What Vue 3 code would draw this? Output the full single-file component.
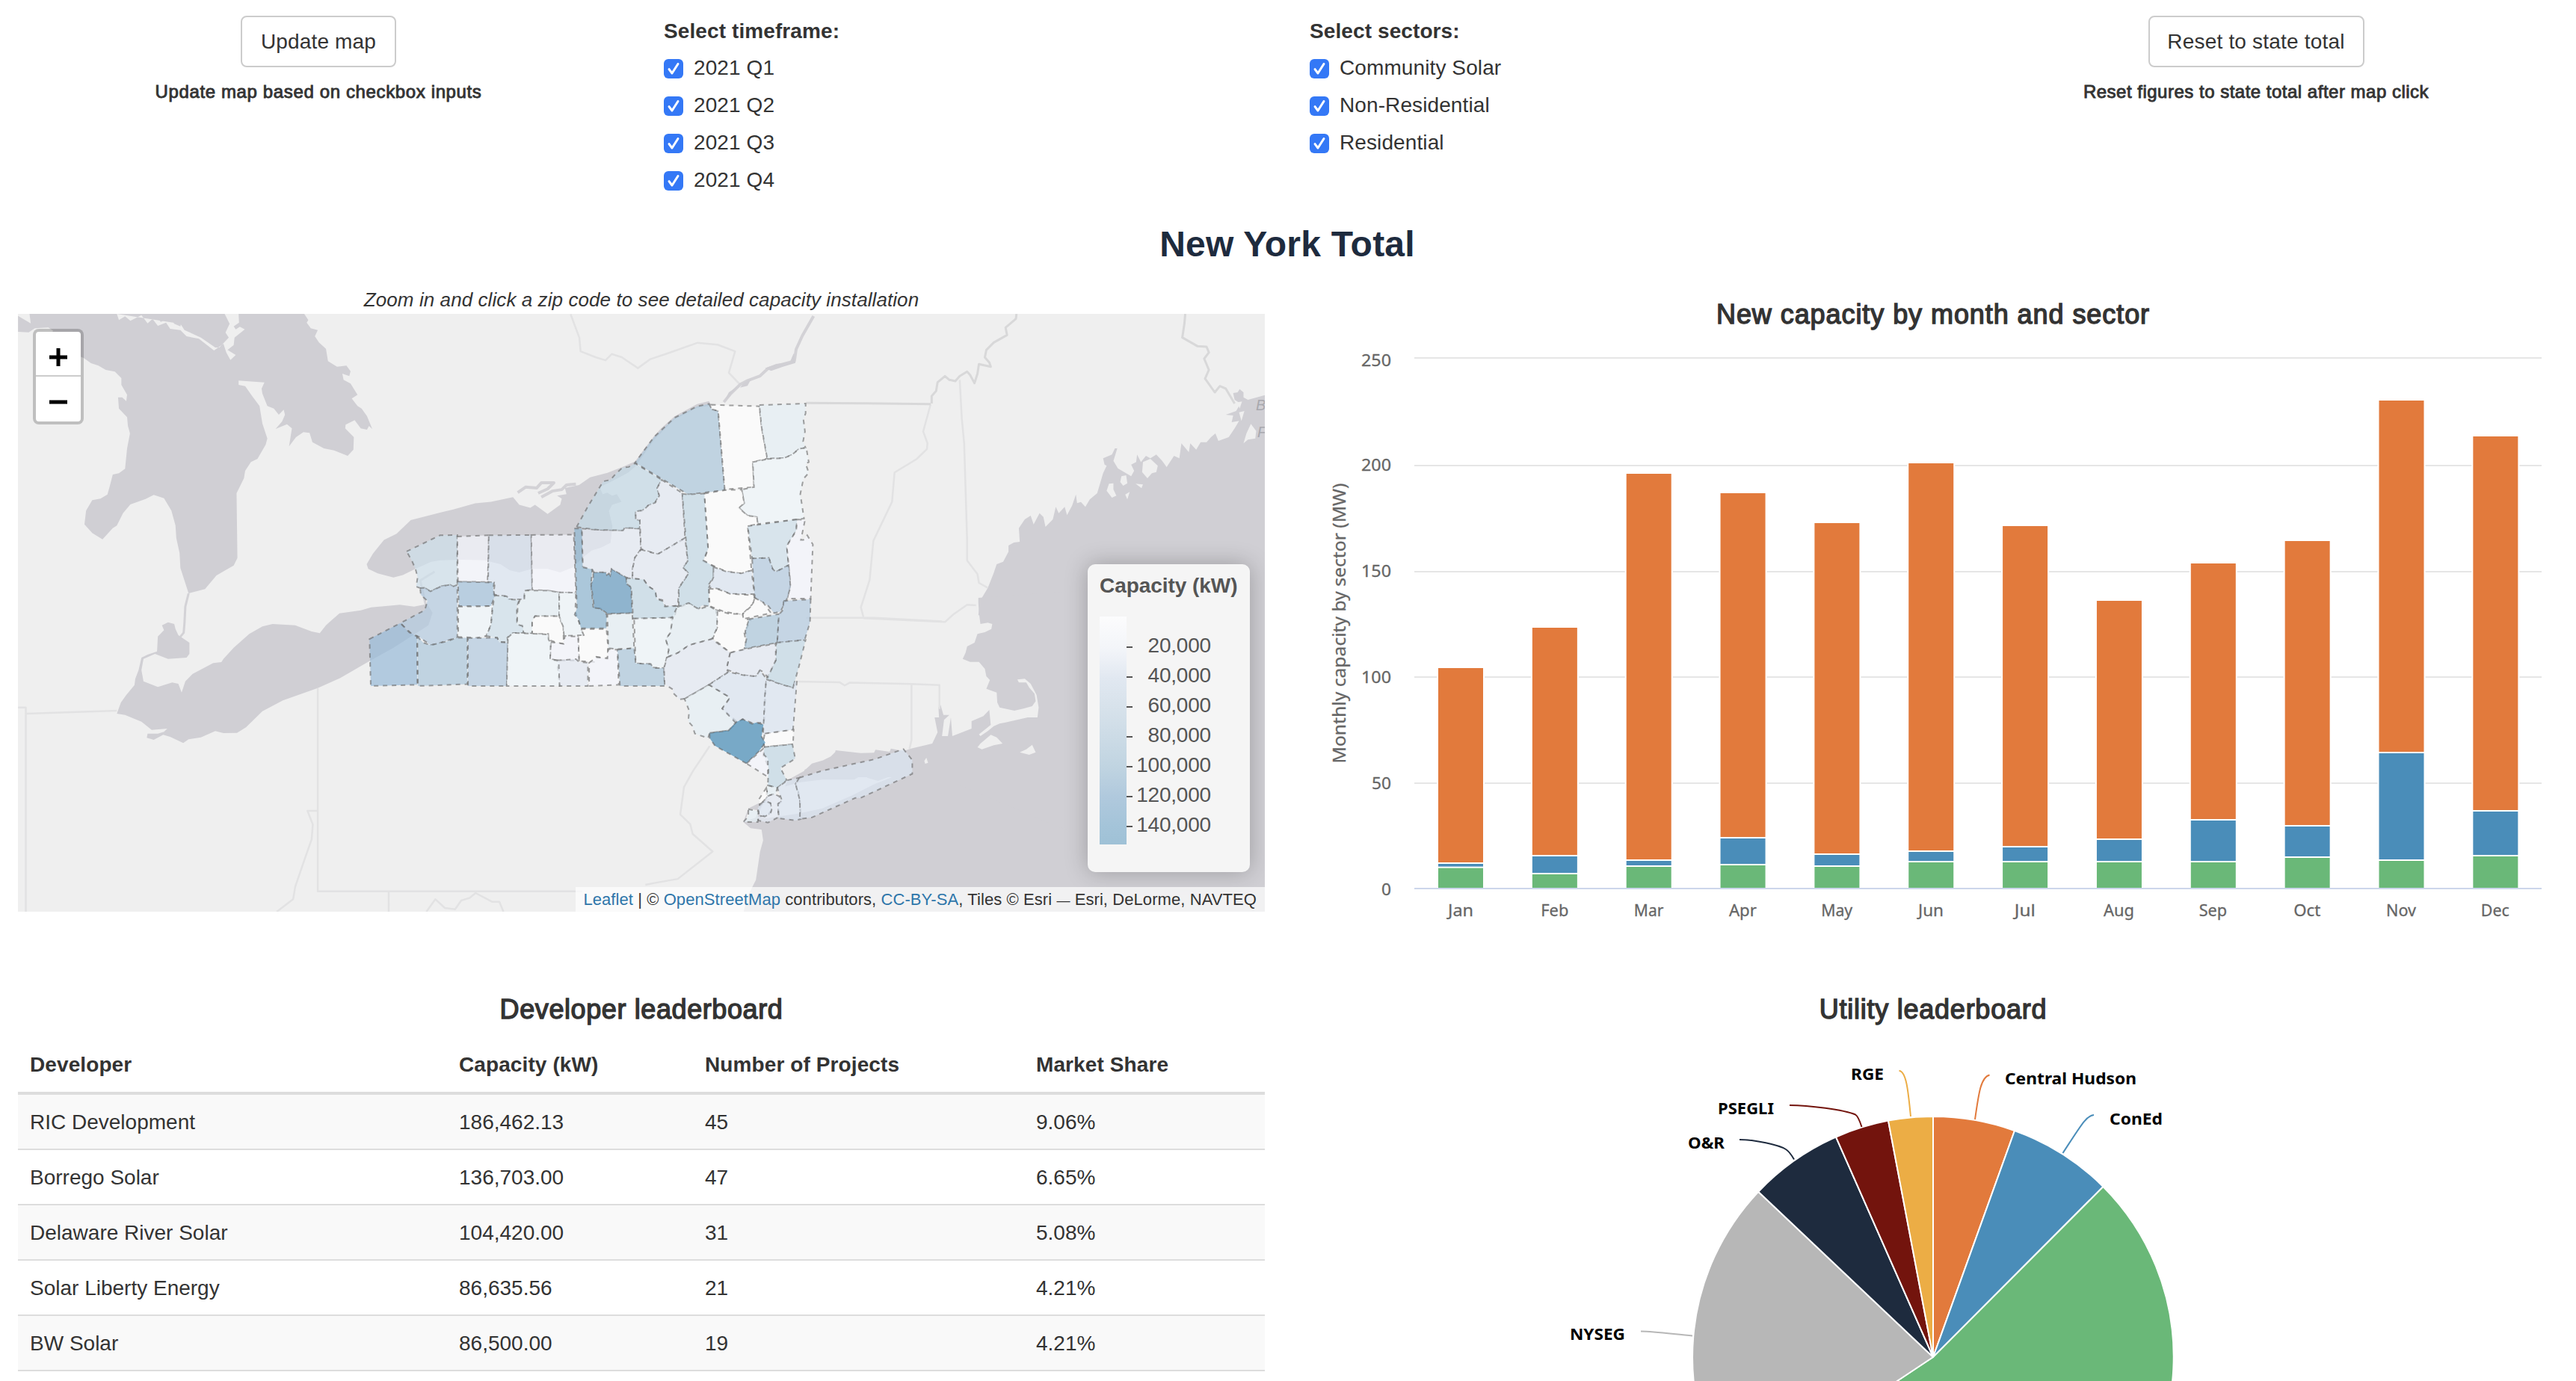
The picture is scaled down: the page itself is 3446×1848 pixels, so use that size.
<script setup>
import { reactive } from 'vue'

const timeframes = reactive([
  { label: '2021 Q1', checked: true },
  { label: '2021 Q2', checked: true },
  { label: '2021 Q3', checked: true },
  { label: '2021 Q4', checked: true },
])
const sectors = reactive([
  { label: 'Community Solar', checked: true },
  { label: 'Non-Residential', checked: true },
  { label: 'Residential', checked: true },
])

const developers = [
  ['RIC Development', '186,462.13', '45', '9.06%'],
  ['Borrego Solar', '136,703.00', '47', '6.65%'],
  ['Delaware River Solar', '104,420.00', '31', '5.08%'],
  ['Solar Liberty Energy', '86,635.56', '21', '4.21%'],
  ['BW Solar', '86,500.00', '19', '4.21%'],
]

// top = top of the stack, mid = top of the blue part, low = top of the green part
const months = [
  { name: 'Jan', w: 34, top: 894, mid: 1155, low: 1160.6 },
  { name: 'Feb', w: 37, top: 840, mid: 1145, low: 1169 },
  { name: 'Mar', w: 39.5, top: 634, mid: 1151, low: 1159 },
  { name: 'Apr', w: 37, top: 660, mid: 1121, low: 1157 },
  { name: 'May', w: 42, top: 700, mid: 1143, low: 1159 },
  { name: 'Jun', w: 34, top: 620, mid: 1139, low: 1153 },
  { name: 'Jul', w: 28, top: 704, mid: 1133, low: 1153 },
  { name: 'Aug', w: 41, top: 804, mid: 1123, low: 1153 },
  { name: 'Sep', w: 37.5, top: 754, mid: 1097, low: 1153 },
  { name: 'Oct', w: 36, top: 724, mid: 1105, low: 1147 },
  { name: 'Nov', w: 40, top: 536, mid: 1007, low: 1151 },
  { name: 'Dec', w: 38, top: 584, mid: 1085, low: 1145 },
].map((m, i) => ({ ...m, x: 1924 + i * 125.85, cx: 1954 + i * 125.8 }))

const gridLines = [478, 622, 764, 905, 1047]
const yLabels = [
  { t: '250', y: 490, w: 40 }, { t: '200', y: 630, w: 40 }, { t: '150', y: 772, w: 40 },
  { t: '100', y: 914, w: 40 }, { t: '50', y: 1056, w: 26 }, { t: '0', y: 1198, w: 13 },
]

const slices = [
  { c: '#e27a3c', d: 'M2586 1816L2586 1494A322 322 0 0 1 2695 1513Z' },
  { c: '#4a8db9', d: 'M2586 1816L2695 1513A322 322 0 0 1 2813.5 1588Z' },
  { c: '#6ab878', d: 'M2586 1816L2813.5 1588A322 322 0 1 1 2318 1994.5Z' },
  { c: '#b7b7b7', d: 'M2586 1816L2318 1994.5A322 322 0 0 1 2352.2 1594.7Z' },
  { c: '#1e2b3e', d: 'M2586 1816L2352.2 1594.7A322 322 0 0 1 2456 1521.5Z' },
  { c: '#73140d', d: 'M2586 1816L2456 1521.5A322 322 0 0 1 2526 1499.6Z' },
  { c: '#ecad45', d: 'M2586 1816L2526 1499.6A322 322 0 0 1 2586 1494Z' },
]
const callouts = [
  { t: 'RGE', x: 2476, y: 1444.7, w: 44, c: '#ecad45', d: 'M2540.5 1432.8C2550 1434 2552.5 1458 2556 1494' },
  { t: 'Central Hudson', x: 2682, y: 1450.6, w: 176, c: '#e27a3c', d: 'M2661.5 1438.4C2650 1441 2647 1462 2642 1498' },
  { t: 'ConEd', x: 2822, y: 1504.8, w: 71, c: '#4a8db9', d: 'M2801 1492C2791 1493 2785 1504 2759.5 1543' },
  { t: 'PSEGLI', x: 2298, y: 1490.8, w: 75, c: '#73140d', d: 'M2394 1479C2420 1479 2466 1485 2482 1491.5Q2486 1494 2490.5 1508' },
  { t: 'O&R', x: 2258, y: 1536.6, w: 49, c: '#1e2b3e', d: 'M2327 1525C2347 1525 2380 1532 2389 1538Q2394 1541 2400 1551.5' },
  { t: 'NYSEG', x: 2100, y: 1792.8, w: 74, c: '#b7b7b7', d: 'M2195 1781.6C2215 1782 2244 1786 2264 1787.5' },
]

const legendTicks = ['20,000', '40,000', '60,000', '80,000', '100,000', '120,000', '140,000']

const shades = {
  w: '#ffffff', a: '#f5f6fd', b: '#eff7fb', c: '#e6eff5', n: '#e4e9f3', d: '#dbe6f2', e: '#cedfeb',
  f: '#c3d8e6', g: '#b3cbdf', h: '#acc8dc', i: '#a3c1da', j: '#99bad8', k: '#8eb6d2', l: '#669bc1', m: '#468bb7',
}
const counties = [
  ['e', '152,583 258,530 313,529 313,690 300,698 290,692 262,697 228,714 208,702 195,703 182,698 187,668 180,640 168,612'],
  ['a', '313,534 413,530 412,600 409,683 315,682'],
  ['d', '413,530 548,529 551,709 527,711 526,740 473,740 470,730 428,724 432,690 430,685 411,683'],
  ['a', '548,529 683,528 690,720 635,717 600,711 551,709'],
  ['g', '195,703 208,702 228,714 262,697 290,692 300,698 313,692 313,865 280,875 250,886 228,890 190,862 170,855 132,818 210,775 218,745 197,725'],
  ['i', '315,682 430,685 427,705 432,730 420,762 385,763 318,762'],
  ['b', '316,764 425,762 420,825 410,845 405,860 375,866 316,863'],
  ['e', '432,727 470,730 478,740 510,742 502,765 503,822 520,825 525,850 490,850 472,865 474,880 445,880 440,866 405,860 420,825 426,762'],
  ['c', '526,740 527,711 600,711 637,717 637,795 560,795 551,810 551,852 523,850 522,828 503,822 505,760 512,742'],
  ['w', '560,795 640,795 642,812 650,830 651,886 630,882 603,872 602,853 551,853 551,815'],
  ['b', '637,717 690,718 688,780 700,815 715,857 652,860 650,830 642,812 637,795'],
  ['k', '685,508 709,508 712,632 742,642 738,690 745,765 768,770 788,790 787,835 706,835 698,805 686,790 693,770 690,660'],
  ['l', '745,651 785,651 788,660 795,656 799,662 803,640 850,668 852,690 865,700 869,785 790,787 768,770 748,768 745,740 738,690 745,675'],
  ['n', '709,508 760,512 840,514 845,505 893,508 897,575 878,602 870,640 870,672 850,668 803,640 799,662 795,655 788,660 785,651 747,651 742,642 712,635'],
  ['f', '692,503 730,432 777,353 800,348 815,330 838,308 858,306 878,294 963,348 948,375 955,400 940,425 920,432 900,450 880,452 880,478 893,480 893,508 845,505 840,514 760,512'],
  ['n', '963,348 1028,392 1037,540 950,592 897,575 893,480 880,478 880,452 905,447 920,432 942,423 955,400 948,375'],
  ['h', '1113,99 1122,117 1142,122 1163,382 1047,396 963,345 878,292 938,208 1003,145 1075,107'],
  ['w', '1120,102 1273,107 1280,175 1298,278 1252,290 1256,372 1163,380 1142,122 1122,117'],
  ['c', '1273,103 1420,98 1420,130 1413,150 1418,190 1412,222 1420,243 1400,246 1375,267 1350,277 1298,278 1280,175'],
  ['b', '1298,280 1350,277 1375,267 1400,246 1422,243 1430,290 1420,295 1430,325 1413,345 1403,395 1415,475 1268,493 1265,470 1235,465 1208,440 1225,425 1217,380 1256,372 1252,290'],
  ['w', '1098,393 1163,382 1217,380 1225,425 1208,440 1235,465 1265,470 1268,493 1236,500 1248,645 1215,655 1165,648 1095,615 1110,575'],
  ['f', '1028,394 1047,396 1098,393 1110,575 1095,612 1127,632 1127,668 1113,690 1113,762 1090,760 1080,772 1048,752 1017,768 1017,702 1048,655 1030,635 1045,615'],
  ['n', '897,577 950,592 1037,538 1045,615 1030,635 1048,655 1017,702 1014,760 975,765 965,742 945,738 942,712 920,697 905,675 870,672 870,640 878,602'],
  ['f', '850,670 905,675 920,697 942,712 947,740 965,745 972,763 1012,762 1003,800 872,803 866,700 852,690'],
  ['e', '1236,500 1393,478 1390,515 1360,565 1366,628 1325,650 1315,640 1303,604 1250,606'],
  ['a', '1393,478 1418,480 1405,545 1413,545 1425,530 1443,560 1436,738 1362,737 1372,690 1366,628 1360,565 1390,515'],
  ['g', '1250,606 1303,604 1315,640 1325,650 1366,628 1372,700 1360,740 1340,780 1320,785 1300,760 1258,735'],
  ['d', '1127,634 1165,648 1215,655 1248,645 1257,723 1180,722 1145,706 1113,700 1127,668'],
  ['w', '1113,705 1145,708 1180,722 1258,727 1252,755 1218,790 1160,780 1115,762'],
  ['w', '1258,735 1285,750 1310,785 1222,804 1218,790 1252,758'],
  ['w', '1135,775 1180,788 1220,787 1222,803 1245,808 1225,850 1230,875 1228,905 1180,915 1125,868 1140,830'],
  ['h', '1240,805 1335,788 1330,882 1225,902 1232,870 1228,845'],
  ['g', '1350,745 1436,740 1434,815 1417,873 1330,882 1335,790 1348,775'],
  ['f', '1327,882 1420,873 1400,955 1380,1030 1340,1018 1295,1000 1325,940'],
  ['n', '1180,915 1228,903 1325,885 1325,940 1300,995 1285,978 1275,972 1262,993 1220,988 1168,970'],
  ['c', '1012,765 1048,752 1080,772 1113,762 1140,778 1138,835 1122,870 1050,890 1015,915 980,930 985,905 975,870 990,850 995,800'],
  ['b', '875,803 998,800 990,850 975,870 985,905 970,965 930,963 925,952 880,950'],
  ['c', '790,788 869,785 875,900 822,903 793,900'],
  ['w', '706,837 787,837 792,895 790,935 755,928 748,945 700,942 697,862 715,857'],
  ['a', '610,880 651,886 655,860 697,862 700,940 630,940 608,935'],
  ['n', '630,940 690,936 700,945 728,948 728,1024 638,1024'],
  ['a', '732,948 755,930 790,933 793,903 822,905 826,1020 732,1024'],
  ['h', '822,905 875,900 880,950 928,952 935,965 970,966 972,1024 830,1024'],
  ['n', '980,930 1015,915 1050,890 1122,870 1180,915 1168,970 1175,978 1113,1020 1035,1066 1020,1068 1000,1048 998,1035 972,1018 970,965'],
  ['c', '1035,1066 1113,1020 1180,1062 1155,1098 1198,1138 1195,1150 1175,1170 1115,1178 1110,1195 1068,1180 1060,1155 1047,1140 1050,1105'],
  ['d', '1113,1020 1175,978 1220,988 1262,993 1275,972 1295,1000 1288,1145 1250,1145 1220,1133 1198,1145 1155,1098 1180,1062'],
  ['d', '1295,1002 1340,1018 1380,1030 1385,1010 1392,1010 1380,1168 1285,1182 1290,1060'],
  ['w', '1290,1180 1382,1167 1380,1215 1290,1224 1285,1210'],
  ['m', '1115,1178 1175,1170 1200,1142 1220,1133 1250,1148 1262,1144 1286,1150 1280,1190 1292,1210 1270,1240 1232,1278 1132,1220 1115,1195'],
  ['f', '1290,1224 1378,1215 1387,1262 1340,1293 1360,1333 1330,1358 1300,1350 1302,1290 1285,1250'],
  ['a', '1232,1278 1285,1230 1288,1250 1300,1262 1300,1322'],
  ['j', '34,870 132,818 160,848 185,862 186,1020 38,1024'],
  ['h', '186,862 205,882 228,890 280,878 310,866 345,866 345,1018 188,1024'],
  ['g', '347,867 440,866 445,880 474,882 470,1024 347,1024'],
  ['b', '474,865 490,850 602,855 603,872 610,882 608,938 635,940 638,1024 470,1024'],
  ['c', '1300,1350 1330,1358 1325,1378 1295,1385'],
  ['w', '1295,1358 1300,1385 1285,1408 1275,1415 1272,1395'],
  ['n', '1300,1385 1318,1378 1335,1385 1345,1400 1335,1410 1332,1455 1300,1472 1270,1465 1268,1452 1300,1448 1312,1430 1308,1408 1285,1403'],
  ['d', '1275,1412 1290,1400 1308,1408 1312,1430 1308,1443 1290,1452 1272,1445 1268,1425'],
  ['c', '1238,1428 1270,1435 1268,1470 1222,1470 1238,1452'],
  ['d', '1362,1333 1400,1325 1388,1345 1395,1360 1402,1400 1405,1460 1388,1465 1335,1458 1332,1410 1345,1400 1338,1380 1330,1358'],
  ['d', '1400,1325 1473,1302 1640,1264 1731,1231 1759,1267 1759,1312 1595,1391 1578,1391 1440,1455 1402,1460 1402,1400 1388,1345'],
]
</script>

<template>
  <main class="page">
    <section class="controls">
      <div class="control center">
        <button class="btn" type="button">Update map</button>
        <p class="hint">Update map based on checkbox inputs</p>
      </div>
      <div class="control">
        <p class="group-label">Select timeframe:</p>
        <label v-for="t in timeframes" :key="t.label" class="check">
          <input v-model="t.checked" type="checkbox" />
          <svg class="box" viewBox="0 0 26 26"><rect width="26" height="26" rx="6" /><path d="M7 13.6L11 19L19 6.5" /></svg>
          <span>{{ t.label }}</span>
        </label>
      </div>
      <div class="control">
        <p class="group-label">Select sectors:</p>
        <label v-for="s in sectors" :key="s.label" class="check">
          <input v-model="s.checked" type="checkbox" />
          <svg class="box" viewBox="0 0 26 26"><rect width="26" height="26" rx="6" /><path d="M7 13.6L11 19L19 6.5" /></svg>
          <span>{{ s.label }}</span>
        </label>
      </div>
      <div class="control center">
        <button class="btn reset" type="button">Reset to state total</button>
        <p class="hint reset-hint">Reset figures to state total after map click</p>
      </div>
    </section>

    <h2 class="heading">New York Total</h2>

    <section class="row figures">
      <div class="col">
        <p class="map-note">Zoom in and click a zip code to see detailed capacity installation</p>
        <div class="map">
          <svg class="tiles" viewBox="24 420 1668 800">
            <!-- Great Lakes -->
            <g transform="translate(0 400) scale(.54847 .33333)" class="water">
              <path d="M72 60L75 98L58 82L44 68V132L70 134L85 118L118 115L130 128L100 170L204 237L222 258L240 268L258 285L280 292L296 318L296 345L310 385L308 410L298 395L288 395L290 440L310 475L312 510L317 540L310 600L305 682L290 700L275 705L268 750L262 785L245 802L225 808L210 850L206 905L225 940L250 965L275 920L285 910L300 860L318 825L355 803L375 787L400 800L418 850L428 910L430 960L438 1020L440 1080L460 1182L500 1165L528 1110L570 1070L579 1040L577 780L595 720L598 690L612 655L628 642L648 585L652 560L640 500L633 430L615 390L598 350L582 345V328L600 330L645 335L638 360L640 380L652 430L668 440L680 465L692 445L695 465L688 492L672 522L700 503L712 520L705 592L722 555L740 535L755 538L762 575L790 600L815 608L848 630L862 605L863 555L842 520L843 505L865 487L880 520L895 525L900 510L908 522L895 470L882 440L872 430L858 400L872 385L855 340L838 325L835 300L852 310L855 290L845 268L822 272L800 250L795 200L778 175L768 150L775 125L758 118L748 95L752 85L742 60Z" />
              <path class="land" d="M285 60L290 85L305 70L318 88L345 65L360 98L372 80L385 108L405 95L415 120L440 125L455 150L485 160L522 207L545 180L552 215L562 245L575 225L555 205L570 185L572 155L597 122L585 112L575 122L570 110L583 95L582 60H548L560 100L550 135L558 155L535 195L525 195L490 155L450 125L440 100Z" />
              <path d="M378 60L392 92L415 75L425 100L440 110L445 75L420 60ZM495 60L505 100L515 60Z" />
              <path class="river" d="M460 1182L452 1235L450 1300L448 1340L438 1360" />
              <path class="river" d="M1060 1095L1025 1130L1040 1240" />
            </g>
            <g transform="translate(0 800) scale(.54847 .33333)" class="water">
              <path d="M410 98L395 110L400 130L385 155L383 215L360 228L345 240L338 290L330 325L328 350L308 390L295 420L285 465L305 470L345 497L370 530L408 525L400 538L385 545L360 545L358 562L375 570L398 550L415 558L447 583L460 568L490 560L525 535L545 543L578 542L600 520L640 455L690 412L775 362L830 322L900 255L960 200L1045 110L1055 60L1042 25L1010 35L975 28L905 38L880 50L828 62L805 95L795 110L780 142L760 135L720 110L665 105L640 115L608 145L570 200L545 245L540 258L520 262L470 305L452 335L443 380L435 345L420 340L385 358L350 335L345 290L350 245L378 225L410 245L455 240L462 225V180L435 150L428 125L425 105Z" />
            </g>
            <g transform="translate(480 500) scale(.42092 .40816)" class="water">
              <path d="M25 625L45 590L80 545L120 525L165 480L260 455L300 445L370 425L420 420L490 405L510 430L545 440L560 430L600 460L640 430L645 410L630 400L660 395L655 375L700 365L735 340L790 325L840 305L878 288L905 250L938 205L960 180L1003 140L1075 100L1113 90L1120 104L1075 112L1003 150L940 215L878 305L855 325L800 355L765 372L775 395L790 390L805 400L820 395L835 420L805 430L795 450L806 500L800 555L770 570L740 580L715 600L680 635L640 652L600 640L550 640L510 652L480 645L450 625L400 612L330 610L260 612L230 617L180 640L140 660L110 668L60 655L30 640Z" />
              <path class="river wide" d="M505 390L530 372L565 375L580 358L620 358L600 378L570 392M580 405L615 385L645 380L660 365L690 362" />
              <path d="M1362 1333L1415 1303L1440 1278L1475 1268L1500 1255L1515 1240L1525 1250H2879V1764H1223L1235 1715L1262 1660L1275 1568L1285 1530L1280 1495L1245 1490L1222 1470L1238 1425L1268 1410L1300 1395L1345 1380Z" />
              <path class="land" d="M1285 1410L1320 1385L1350 1355L1400 1340L1473 1331L1575 1331L1600 1315L1652 1280L1648 1292L1615 1325L1650 1335L1736 1302L1690 1325L1640 1345L1567 1383L1473 1425L1400 1442L1330 1452L1290 1458L1270 1440Z" />
              <path class="land" d="M1240 1425L1268 1432L1262 1455L1228 1468Z" />
            </g>
            <!-- Atlantic coast -->
            <g transform="translate(1100 400) scale(.39541 .33333)" class="water">
              <path d="M1500 385L1470 395L1440 405L1425 395L1425 375L1412 362L1405 375L1390 378L1395 405L1415 420L1400 450L1365 465L1390 468L1385 495L1410 490L1395 520L1375 555L1340 570L1330 540L1315 555L1300 575L1280 575L1265 605L1245 580L1240 615L1215 580L1208 640L1190 630L1165 675L1150 650L1130 625L1110 640L1095 630L1078 655L1065 625L1062 655L1045 665L1055 690L1045 712L1000 680L985 650L998 600L990 600L980 625L950 640L955 665L962 670L950 700L940 740L930 780L905 805L890 835L875 815L862 820L858 785L845 830L828 868L820 835L800 860L790 835L780 885L755 915L748 875L735 860L715 905L705 870L685 885L665 920L668 975L648 978L630 990L630 1015L612 1055L590 1065L580 1100L560 1160L535 1210L528 1270H1500Z" />
              <path class="land" d="M1085 655L1110 642L1135 670L1130 695L1115 700L1100 720L1082 695ZM970 742L985 740L985 765L995 790L980 798L962 770ZM1012 712L1028 708L1032 740L1018 750L1008 735ZM1060 742L1085 745L1080 760ZM1025 785L1040 775L1032 805ZM1450 502L1468 530L1465 560L1440 565L1425 580L1435 540ZM1405 415L1420 412L1412 440ZM1410 455L1428 450L1418 490Z" />
            </g>
            <g transform="translate(1100 740) scale(.39541 .33333)" class="water">
              <path d="M528 180L528 200L530 240L535 285L560 280L575 285L572 305L550 318L525 325L515 360L490 375L485 400L475 425L500 437L530 437L550 465L555 495L567 510L555 545L590 560L592 600L600 620L650 633L680 625L710 615L722 595L718 565L700 540L690 520L665 520L660 508L685 505L705 525L725 570L732 620L728 660L695 660L620 680L600 685L580 695L560 715L535 735L530 728L570 690L565 630L545 655L505 675L505 705L440 735L435 660L425 735L405 735L412 670L430 650L410 650L400 610L393 620L395 660L380 660L390 720L372 765L300 785L275 795L232 785L228 798L180 790L175 802L130 803L45 792L42 812L10 830L-60 870V900H400L1500 1450V100Z" />
              <path class="land" d="M525 780L535 765L550 750L570 730L590 740L610 765L580 772L540 788ZM668 800L690 788L710 770L722 800L700 810ZM345 835L352 822L358 842L348 846Z" />
            </g>
            <!-- borders and rivers -->
            <g transform="translate(760 410) scale(.33333 .52296)" class="border">
              <path d="M10 20L45 80L50 115L110 130L150 138L175 122L215 130L280 158L330 135L400 120L520 93L600 98L670 115L645 170L690 200" />
              <path class="river wide" d="M985 25L940 75L915 110L908 140L850 150L800 160L770 178L720 190L690 200L650 225L625 245" />
              <path class="watery" d="M905 120L912 145L860 155L815 165L790 158L835 147L890 143ZM735 185L720 203L690 208L705 195ZM680 205L655 225L625 245L645 220Z" />
              <path d="M1455 250L1440 285L1425 320L1442 350L1440 365L1400 390L1310 425L1300 500L1225 600L1210 700L1175 770L1185 795" />
              <path d="M568 1125L500 1190L465 1230L450 1300L490 1325L500 1350L580 1395L440 1465L350 1475L310 1480M955 797L1230 797L1500 806M915 960L1090 962L1110 970L1130 963L1378 966L1490 969V1030M1378 966V1110L1370 1132" />
              <path class="national" d="M955 247L1200 248L1455 250" />
            </g>
            <g transform="translate(1100 400) scale(.39541 .33333)" class="border">
              <path class="national" d="M370 420L370 390L385 370L390 335L415 310L430 325L450 330L465 310L490 292L500 305L515 338L525 300L530 262L570 272L565 255L550 235L555 205L580 175L625 145L620 115L655 80L657 60M1228 60L1225 100L1218 155L1240 170L1270 190L1300 192L1308 215L1292 240L1308 285L1295 320L1328 375L1345 350L1365 360L1395 420" />
              <path d="M465 325L472 480L480 580L490 970V1050L525 1105L530 1140L560 1160M140 1282L415 1297L445 1265L490 1228L520 1230" />
            </g>
            <g transform="translate(0 800) scale(.54847 .33333)" class="border">
              <path d="M775 362V1178H1420M948 1178V1260M775 855H750L763 910L760 970L745 1040L720 1160L715 1210L675 1260M1040 1260L1062 1210L1085 1245L1110 1250L1125 1215L1145 1205L1160 1185L1200 1220H1218L1228 1260M65 465L285 453M44 440H63V1260" />
            </g>
            <text class="sea-label" x="1680" y="549">B</text>
            <text class="sea-label" x="1682" y="585">F</text>
            <!-- county choropleth -->
            <g transform="translate(480 500) scale(.42092 .40816)" class="counties">
              <polygon v-for="(c, i) in counties" :key="i" :points="c[1]" :fill="shades[c[0]]" />
            </g>
          </svg>

          <div class="zoom">
            <button type="button" aria-label="Zoom in"><svg viewBox="0 0 26 26"><path d="M1 13H25M13 1V25" /></svg></button>
            <button type="button" aria-label="Zoom out"><svg viewBox="0 0 26 26"><path d="M1 13H25" /></svg></button>
          </div>

          <aside class="legend">
            <strong>Capacity (kW)</strong>
            <div class="scale">
              <div class="ramp"></div>
              <ul>
                <li v-for="t in legendTicks" :key="t"><i></i><span>{{ t }}</span></li>
              </ul>
            </div>
          </aside>

          <p class="attribution"><a>Leaflet</a> | © <a>OpenStreetMap</a> contributors, <a>CC-BY-SA</a>, Tiles © Esri <span class="dash">—</span> Esri, DeLorme, NAVTEQ</p>
        </div>
      </div>

      <div class="col">
        <h4 class="title chart-title">New capacity by month and sector</h4>
        <svg class="bars" viewBox="1752 460 1668 800">
          <rect v-for="g in gridLines" :key="g" x="1892" :y="g" width="1508" height="2" fill="#e6e6e6" />
          <g v-for="m in months" :key="m.name">
            <rect :x="m.x - 2" :y="m.top - 2" width="64" :height="1190 - m.top" fill="#fff" />
            <rect :x="m.x" :y="m.top" width="60" :height="m.mid - 1 - m.top" fill="#e27a3c" />
            <rect :x="m.x" :y="m.mid + 1" width="60" :height="m.low - m.mid - 2" fill="#4a8db9" />
            <rect :x="m.x" :y="m.low + 1" width="60" :height="1187 - m.low" fill="#6ab878" />
            <text :x="m.cx" y="1225.7" text-anchor="middle" :textLength="m.w" lengthAdjust="spacingAndGlyphs">{{ m.name }}</text>
          </g>
          <rect x="1892" y="1188" width="1508" height="2" fill="#ccd6eb" />
          <text v-for="l in yLabels" :key="l.t" x="1861" :y="l.y" text-anchor="end" :textLength="l.w" lengthAdjust="spacingAndGlyphs">{{ l.t }}</text>
          <text class="axis" transform="translate(1799.5 834) rotate(-90)" text-anchor="middle" textLength="375" lengthAdjust="spacingAndGlyphs">Monthly capacity by sector (MW)</text>
        </svg>
      </div>
    </section>

    <section class="row boards">
      <div class="col">
        <h4 class="title developer-title">Developer leaderboard</h4>
        <table class="table">
          <colgroup><col class="c1" /><col class="c2" /><col class="c3" /><col /></colgroup>
          <thead>
            <tr><th>Developer</th><th>Capacity (kW)</th><th>Number of Projects</th><th>Market Share</th></tr>
          </thead>
          <tbody>
            <tr v-for="d in developers" :key="d[0]"><td v-for="(v, i) in d" :key="i">{{ v }}</td></tr>
          </tbody>
        </table>
      </div>
      <div class="col">
        <h4 class="title utility-title">Utility leaderboard</h4>
        <svg class="pie" viewBox="1752 1390 1668 458">
          <path v-for="s in slices" :key="s.c" :d="s.d" :fill="s.c" stroke="#fff" stroke-width="2" stroke-linejoin="round" />
          <g v-for="c in callouts" :key="c.t">
            <path :d="c.d" :stroke="c.c" fill="none" stroke-width="2" />
            <text :x="c.x" :y="c.y" :textLength="c.w" lengthAdjust="spacingAndGlyphs">{{ c.t }}</text>
          </g>
        </svg>
      </div>
    </section>
  </main>
</template>

<style>
body { margin: 0; background: #fff; overflow: hidden; }
</style>

<style scoped>
* { box-sizing: border-box; }
.page {
  width: 3446px; height: 1848px; padding: 20px 26px 0 24px; overflow: hidden;
  font-family: "Liberation Sans", Arial, sans-serif; font-size: 28px; line-height: 40px; color: #333;
}
p, h2, h4, ul { margin: 0; padding: 0; }
.controls { display: grid; grid-template-columns: repeat(4, 804px); gap: 60px; height: 280px; }
.control.center { display: flex; flex-direction: column; align-items: center; }
.btn {
  width: 208px; height: 69px; margin-top: 1px; padding: 0; border: 2px solid #ccc; border-radius: 8px; background: #fff;
  font: 28px/40px "Liberation Sans", Arial, sans-serif; letter-spacing: .15px; color: #333;
}
.btn.reset { width: 289px; letter-spacing: .2px; }
.hint { margin-top: 19px; font-size: 24px; line-height: 28px; letter-spacing: .63px; -webkit-text-stroke: .9px #333; white-space: nowrap; }
.reset-hint { letter-spacing: .5px; }
.group-label { font-weight: bold; margin-top: 2px; line-height: 40px; height: 44px; letter-spacing: .1px; }
.check { display: flex; align-items: center; gap: 14px; height: 50px; line-height: 40px; letter-spacing: .1px; }
.check input { position: absolute; opacity: 0; width: 0; height: 0; margin: 0; }
.box { width: 26px; height: 26px; margin-top: 2px; }
.box rect { fill: #3478f6; }
.box path { fill: none; stroke: #fff; stroke-width: 3; stroke-linecap: round; stroke-linejoin: round; }
.heading { height: 96px; text-align: center; font-size: 48px; line-height: 54px; color: #1e2b3e; letter-spacing: .2px; }
.row { display: grid; grid-template-columns: 1668px 1668px; gap: 60px; }
.figures { margin-top: -14px; height: 948px; }
.map-note { height: 38px; line-height: 38px; text-align: center; font-style: italic; font-size: 26px; letter-spacing: .08px; }
.map { position: relative; width: 1668px; height: 800px; overflow: hidden; background: #efefef; }
.tiles { display: block; width: 1668px; height: 800px; }
.tiles path { vector-effect: non-scaling-stroke; }
.water path { fill: #d0cfd4; }
.water path.land { fill: #efefef; }
.water path.river, .border path.river { fill: none; stroke: #d3d2d6; stroke-width: 3; stroke-linejoin: round; }
.water path.wide, .border path.wide { stroke-width: 4; }
.border path { fill: none; stroke: #e2e2e3; stroke-width: 2.5; stroke-linejoin: round; }
.border path.national { stroke: #d8d8d9; stroke-width: 3; }
.border path.watery { fill: #d0cfd4; stroke: none; }
.sea-label { font: italic 20px "Liberation Sans", Arial, sans-serif; fill: #a8a8ae; }
.counties polygon {
  fill-opacity: .7; stroke: #666; stroke-opacity: .6; stroke-width: 2; stroke-dasharray: 6 6; vector-effect: non-scaling-stroke;
}
.zoom {
  position: absolute; left: 20px; top: 20px; width: 68px; border: 4px solid rgba(0, 0, 0, .2); border-radius: 8px;
  background: #fff; background-clip: padding-box;
}
.zoom button {
  display: flex; align-items: center; justify-content: center; width: 60px; height: 60px; padding: 8px 0 0 0; border: 0; background: none;
}
.zoom button:first-child { border-bottom: 2px solid #ccc; padding-top: 10px; }
.zoom svg { width: 26px; height: 26px; }
.zoom path { stroke: #000; stroke-width: 5; }
.legend {
  position: absolute; right: 20px; top: 335px; width: 217px; height: 412px; padding: 12px 16px; border-radius: 10px;
  background: #f5f5f5; box-shadow: 0 0 30px rgba(0, 0, 0, .25); color: #555;
}
.legend strong { display: block; line-height: 34px; height: 58px; white-space: nowrap; letter-spacing: -.05px; }
.scale { display: flex; }
.ramp {
  width: 36px; height: 305px;
  background: linear-gradient(#fcfcfd 0%, #f3f5f9 14%, #e1e8f1 27%, #d7e2eb 40%, #ccdbe6 53%, #c0d4e1 66%, #b0c9dd 79%, #a4c4d9 92%, #9fc1d6 100%);
}
.scale ul { list-style: none; width: 113px; padding-top: 21px; }
.scale li { display: flex; align-items: center; justify-content: space-between; height: 40px; }
.scale i { width: 8px; height: 2px; background: #555; }
.scale li span { line-height: 40px; margin-top: -4px; letter-spacing: -.2px; }
.attribution {
  position: absolute; right: 0; bottom: 0; height: 33px; padding: 0 11px 0 10px; line-height: 33px; font-size: 22px;
  background: rgba(255, 255, 255, .7); white-space: nowrap; letter-spacing: .08px;
}
.attribution a { color: #2e76aa; }
.dash { font-size: 18px; line-height: 1; }
.title { text-align: center; font-size: 36px; line-height: 40px; font-weight: normal; -webkit-text-stroke: 1.4px #333; }
.chart-title { padding-top: 19px; height: 78px; letter-spacing: .93px; }
.developer-title, .utility-title { padding-top: 1px; height: 41px; }
.developer-title { letter-spacing: .6px; }
.utility-title { letter-spacing: .75px; }
.bars, .pie { display: block; width: 1668px; overflow: visible; }
.bars { height: 800px; }
.bars text { font-family: "Noto Sans", sans-serif; font-size: 21.5px; fill: #666; stroke: #666; stroke-width: .3px; }
.bars text.axis { font-size: 23px; }
.pie { height: 458px; margin-top: 19px; }
.pie text { font-family: "Noto Sans", sans-serif; font-weight: bold; font-size: 21.5px; fill: #000; }
.table { width: 1668px; margin-top: 14px; border-collapse: separate; border-spacing: 0; table-layout: fixed; }
.c1 { width: 574px; }
.c2 { width: 329px; }
.c3 { width: 443px; }
th { text-align: left; padding: 20px 16px 16px; height: 80px; border-bottom: 4px solid #ddd; line-height: 40px; letter-spacing: .1px; }
td { padding: 17px 16px 15px; height: 74px; border-bottom: 2px solid #ddd; line-height: 40px; }
tbody tr:nth-child(odd) { background: #f9f9f9; }
</style>
